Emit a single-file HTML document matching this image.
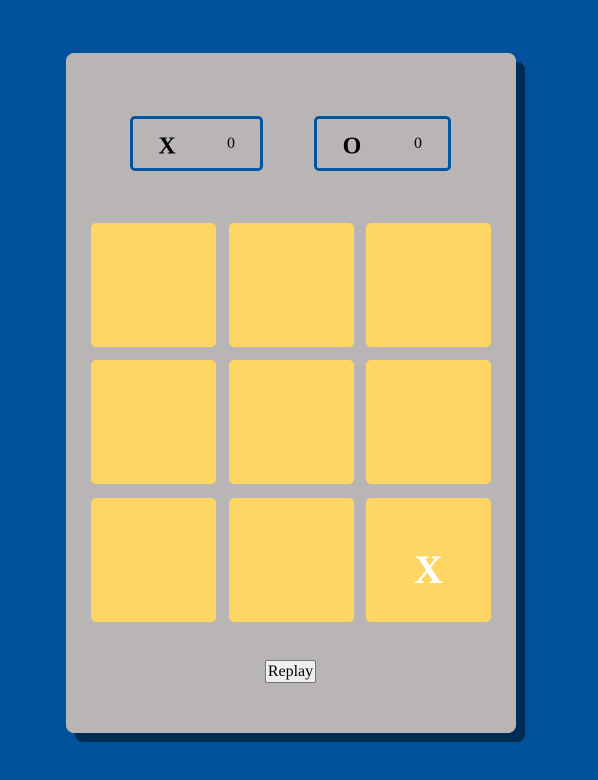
<!DOCTYPE html>
<html><head><meta charset="utf-8"><style>
html,body{margin:0;padding:0;width:598px;height:780px;background:#01529b;overflow:hidden;font-family:"Liberation Serif",serif}
.shadow{position:absolute;left:75px;top:62px;width:450px;height:680px;background:#002b52;border-radius:8px}
.card{position:absolute;left:66px;top:53px;width:450px;height:680px;background:#b9b5b5;border-radius:8px}
.score{position:absolute;top:116px;height:49px;border:3px solid #0055a0;border-radius:5px;box-sizing:content-box}
.score span{position:absolute;top:50%;transform:translate(-50%,-50%);margin-top:3px;font-weight:bold;color:#000}
.cell{position:absolute;width:125px;height:124px;background:#ffd563;border-radius:5px}
.btn{position:absolute;left:265px;top:660px;width:49px;height:21px;background:#efefef;border:1px solid #777;border-radius:2px;font-size:16px;line-height:21px;text-align:center;color:#000}
</style></head><body>
<div class="shadow"></div>
<div class="card"></div>
<div class="score" style="left:130px;width:127px"><span style="left:34px;font-size:24px">X</span><span style="left:98px;font-size:16px;font-weight:normal;margin-top:0">0</span></div>
<div class="score" style="left:314px;width:131px"><span style="left:35px;font-size:24px">O</span><span style="left:101px;font-size:16px;font-weight:normal;margin-top:0">0</span></div>
<div class="cell" style="left:91px;top:223px"></div>
<div class="cell" style="left:229px;top:223px"></div>
<div class="cell" style="left:366px;top:223px"></div>
<div class="cell" style="left:91px;top:360px"></div>
<div class="cell" style="left:229px;top:360px"></div>
<div class="cell" style="left:366px;top:360px"></div>
<div class="cell" style="left:91px;top:498px"></div>
<div class="cell" style="left:229px;top:498px"></div>
<div class="cell" style="left:366px;top:498px"><div style="position:absolute;left:0;right:0;top:49px;text-align:center;color:#fff;font-weight:bold;font-size:40px;line-height:46px">X</div></div>
<div class="btn">Replay</div>
</body></html>
